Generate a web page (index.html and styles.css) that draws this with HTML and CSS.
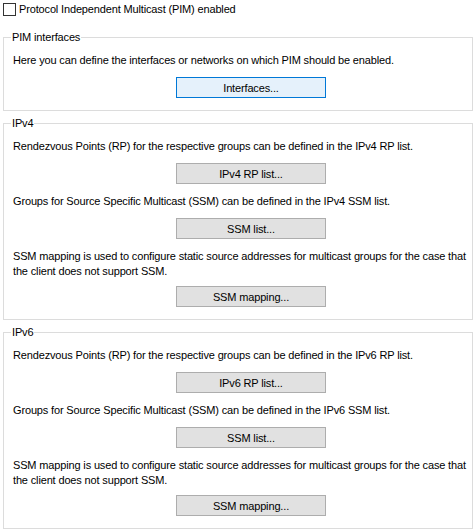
FILE: index.html
```html
<!DOCTYPE html>
<html lang="en">
<head>
  <meta charset="UTF-8">
  <title>PIM</title>
  <link rel="stylesheet" href="styles.css">
</head>
<body>

  <label class="check-row">
    <span class="check-box"></span>
    <span>Protocol Independent Multicast (PIM) enabled</span>
  </label>

  <fieldset class="group">
    <legend>PIM interfaces</legend>
    <p>Here you can define the interfaces or networks on which PIM should be enabled.</p>
    <button class="btn focused">Interfaces...</button>
  </fieldset>

  <fieldset class="group">
    <legend>IPv4</legend>
    <p>Rendezvous Points (RP) for the respective groups can be defined in the IPv4 RP list.</p>
    <button class="btn">IPv4 RP list...</button>
    <p>Groups for Source Specific Multicast (SSM) can be defined in the IPv4 SSM list.</p>
    <button class="btn">SSM list...</button>
    <p>SSM mapping is used to configure static source addresses for multicast groups for the case that the client does not support SSM.</p>
    <button class="btn after-wrap">SSM mapping...</button>
  </fieldset>

  <fieldset class="group">
    <legend>IPv6</legend>
    <p>Rendezvous Points (RP) for the respective groups can be defined in the IPv6 RP list.</p>
    <button class="btn">IPv6 RP list...</button>
    <p>Groups for Source Specific Multicast (SSM) can be defined in the IPv6 SSM list.</p>
    <button class="btn">SSM list...</button>
    <p>SSM mapping is used to configure static source addresses for multicast groups for the case that the client does not support SSM.</p>
    <button class="btn after-wrap">SSM mapping...</button>
  </fieldset>

</body>
</html>
```

FILE: styles.css
```css
body {
  margin: 0;
  padding: 3px 3px 0;
  background: #ffffff;
  font-family: "Liberation Sans", Arial, sans-serif;
  font-size: 11px;
  line-height: 15px;
  letter-spacing: -0.15px;
  color: #000000;
}

.check-row {
  display: flex;
  align-items: center;
  gap: 3px;
  height: 13px;
  margin-bottom: 14px;
}

.check-box {
  width: 11px;
  height: 11px;
  border: 1px solid #333333;
  background: #ffffff;
}

.group {
  margin: 0 0 5px;
  padding: 8px 3px 12px 9px;
  border: 1px solid #dcdcdc;
  min-width: 0;
}

.group legend {
  margin-left: -2px;
  padding: 0 1px;
}

.group p {
  margin: 0;
}

.btn {
  display: block;
  width: 150px;
  height: 21px;
  margin: 9px 0 10px 163px;
  padding: 0;
  border: 1px solid #adadad;
  background: #e1e1e1;
  font-family: inherit;
  font-size: 11px;
  letter-spacing: -0.15px;
  color: #000000;
}

.btn.after-wrap {
  margin-top: 7px;
}

.btn:last-child {
  margin-bottom: 0;
}

.btn.focused {
  border-color: #0078d7;
  background: #e5f1fb;
}
```
